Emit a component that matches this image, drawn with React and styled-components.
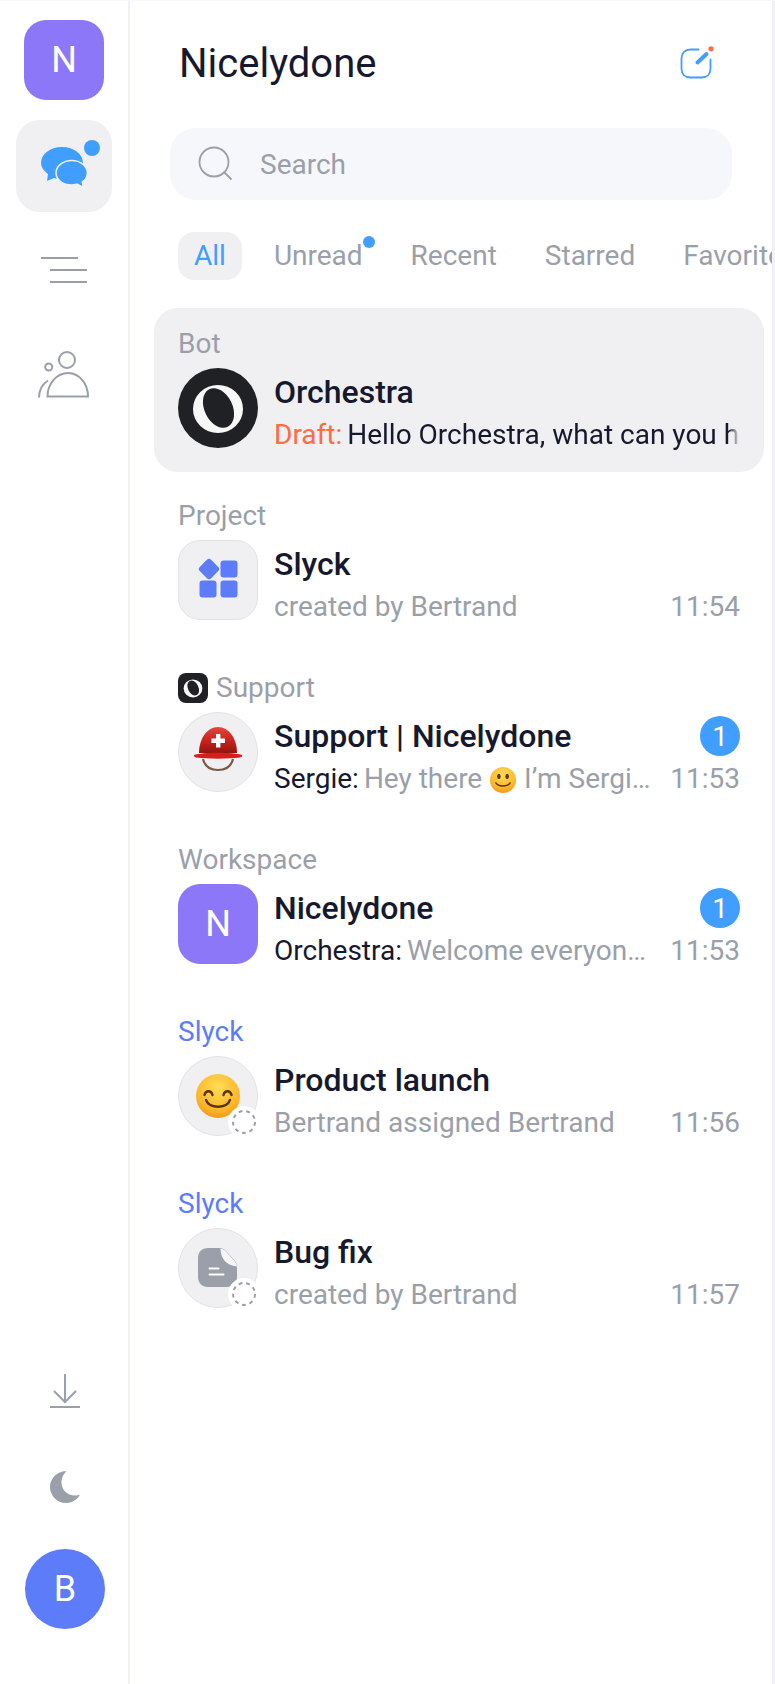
import React from "react";
import styled, { createGlobalStyle } from "styled-components";

const GRAY = "#9a9fa9";
const DARK = "#16192e";
const BLUE = "#409eff";
const INDIGO = "#5c7cfa";
const PURPLE = "#8c77f8";
const SOFT = "#f0f0f2";

const Global = createGlobalStyle`
  html, body { margin: 0; padding: 0; background: #fff; }
  body { font-family: Roboto, "Liberation Sans", sans-serif; color: ${DARK}; }
  * { box-sizing: border-box; }
`;

const Page = styled.div`
  display: flex;
  width: 775px;
  height: 1684px;
  overflow: hidden;
  border-top: 1px solid #f8f8fb;
`;

const Rail = styled.aside`
  width: 130px;
  flex: none;
  border-right: 2px solid #f0f0f6;
  display: flex;
  flex-direction: column;
  justify-content: space-between;
  align-items: center;
  padding: 19px 0 55px;
`;

const RailGroup = styled.div`
  display: flex;
  flex-direction: column;
  align-items: center;
  gap: ${(p) => p.$gap || 12}px;
`;

const Workspace = styled.div`
  width: 80px;
  height: 80px;
  margin-bottom: 8px;
  border-radius: 22px;
  background: ${PURPLE};
  color: #fff;
  font-size: 36px;
  display: flex;
  align-items: center;
  justify-content: center;
`;

const NavItem = styled.div`
  width: 96px;
  height: 92px;
  border-radius: 24px;
  background: ${(p) => (p.$active ? SOFT : "transparent")};
  display: flex;
  align-items: center;
  justify-content: center;
  svg { display: block; }
`;

const Me = styled.div`
  width: 80px;
  height: 80px;
  margin: 2px 0 0 2px;
  border-radius: 50%;
  background: ${INDIGO};
  color: #fff;
  font-size: 36px;
  display: flex;
  align-items: center;
  justify-content: center;
`;

const Tool = styled.div`
  height: 72px;
  margin-left: 2px;
  display: flex;
  align-items: center;
  justify-content: center;
`;

const Panel = styled.main`
  flex: 1;
  min-width: 0;
  border-right: 3px solid #f0f0f6;
  display: flex;
  flex-direction: column;
  padding-top: 40px;
`;

const Header = styled.header`
  height: 46px;
  display: flex;
  align-items: center;
  justify-content: space-between;
  padding: 0 57px 0 49px;
`;

const Title = styled.h1`
  margin: 0;
  font-size: 40px;
  line-height: 46px;
  font-weight: 400;
  color: ${DARK};
`;

const Search = styled.div`
  height: 72px;
  margin: 41px 40px 0;
  padding: 0 28px;
  border-radius: 26px;
  background: #f6f7fb;
  display: flex;
  align-items: center;
  gap: 26px;
  font-size: 28px;
  color: ${GRAY};
`;

const Tabs = styled.nav`
  margin-top: 32px;
  padding-left: 48px;
  display: flex;
  gap: 16px;
  overflow: hidden;
`;

const Tab = styled.div`
  position: relative;
  flex: none;
  height: 48px;
  padding: 0 16px;
  border-radius: 16px;
  font-size: 28px;
  line-height: 48px;
  background: ${(p) => (p.$active ? SOFT : "transparent")};
  color: ${(p) => (p.$active ? BLUE : GRAY)};
`;

const TabDot = styled.span`
  position: absolute;
  top: 4px;
  right: 4px;
  width: 12px;
  height: 12px;
  border-radius: 50%;
  background: ${BLUE};
`;

const List = styled.div`
  margin: 28px 8px 0 24px;
  display: flex;
  flex-direction: column;
  gap: 8px;
`;

const Card = styled.article`
  height: 164px;
  padding: 16px 24px 24px;
  border-radius: 24px;
  background: ${(p) => (p.$active ? SOFT : "transparent")};
`;

const Kind = styled.div`
  height: 40px;
  margin-bottom: 4px;
  display: flex;
  align-items: center;
  gap: 8px;
  font-size: 28px;
  line-height: 40px;
  color: ${(p) => (p.$accent ? INDIGO : GRAY)};
`;

const Row = styled.div`
  height: 80px;
  display: flex;
  gap: 16px;
`;

const Avatar = styled.div`
  position: relative;
  flex: none;
  width: 80px;
  height: 80px;
  border-radius: ${(p) => (p.$square ? "22px" : "50%")};
  background: ${(p) => p.$bg || SOFT};
  border: ${(p) => (p.$bare ? "none" : "1px solid #e3e3e6")};
  color: #fff;
  font-size: 36px;
  display: flex;
  align-items: center;
  justify-content: center;
  svg { display: block; flex: none; }
`;

const Pending = styled.span`
  position: absolute;
  right: -3px;
  bottom: -3px;
  width: 32px;
  height: 32px;
  border-radius: 50%;
  background: #fff;
  display: flex;
  align-items: center;
  justify-content: center;
`;

const Body = styled.div`
  flex: 1;
  min-width: 0;
  padding-top: 4px;
`;

const Top = styled.div`
  height: 40px;
  display: flex;
  align-items: center;
  justify-content: space-between;
`;

const Name = styled.div`
  font-size: 32px;
  line-height: 40px;
  font-weight: 500;
  color: ${DARK};
  white-space: nowrap;
`;

const Count = styled.span`
  width: 40px;
  height: 40px;
  border-radius: 50%;
  background: ${BLUE};
  color: #fff;
  font-size: 28px;
  display: flex;
  align-items: center;
  justify-content: center;
`;

const Bottom = styled.div`
  height: 36px;
  margin-top: 5px;
  display: flex;
  align-items: center;
  gap: 14px;
  font-size: 28px;
  line-height: 36px;
`;

const Line = styled.div`
  flex: 1;
  min-width: 0;
  display: flex;
  gap: 5px;
`;

const Who = styled.span`
  flex: none;
  color: ${(p) => (p.$draft ? "#ff6b45" : DARK)};
`;

const Text = styled.span`
  flex: 1;
  min-width: 0;
  overflow: hidden;
  white-space: nowrap;
  text-overflow: ${(p) => (p.$fade ? "clip" : "ellipsis")};
  color: ${(p) => (p.$fade ? DARK : GRAY)};
  ${(p) => p.$fade && "-webkit-mask-image: linear-gradient(to right, #000 97%, transparent);"}
  svg { display: inline-block; vertical-align: -5px; margin: 0 1px; }
`;

const Time = styled.span`
  flex: none;
  color: ${GRAY};
`;

const SmallMark = styled.span`
  width: 30px;
  height: 30px;
  border-radius: 8px;
  background: #202124;
  display: flex;
  align-items: center;
  justify-content: center;
  svg { display: block; }
`;

function OrchestraMark({ size = 80 }) {
  return (
    <svg width={size} height={size} viewBox="0 0 80 80">
      <ellipse cx="40" cy="41" rx="25" ry="24" fill="#f8f8f8" />
      <ellipse cx="40.500" cy="40" rx="14" ry="21" fill="#202124" transform="rotate(-26 40.500 40)" />
    </svg>
  );
}

function ChatIcon() {
  return (
    <svg width="96" height="92" viewBox="16 120 96 92">
      <path d="M41 163c0-9 9-16 21-16s21 7 21 16-9 16-21 16c-3 0-5 0-8-1l-7 3 1-7c-4-3-7-7-7-11z" fill={BLUE} />
      <path d="M56 173c0-7 7-12.500 15.700-12.500S87.400 166 87.400 173c0 4-2 7-5 9l1 5.500-6.500-3.300c-2 .5-3.500.8-5.200.8C63 185 56 180 56 173z" fill={BLUE} stroke={SOFT} strokeWidth="1.6" />
      <circle cx="92" cy="148" r="8" fill={BLUE} />
    </svg>
  );
}

function MenuIcon() {
  return (
    <svg width="48" height="28" viewBox="0 0 48 28" fill="none" stroke={GRAY} strokeWidth="2">
      <path d="M1 2h37M10 14h37M10 26h37" />
    </svg>
  );
}

function PeopleIcon() {
  return (
    <svg width="52" height="50" viewBox="38 349 52 50" fill="none" stroke={GRAY} strokeWidth="2">
      <circle cx="67" cy="360" r="8" />
      <circle cx="48.700" cy="367" r="3.500" />
      <path d="M47.500 396.500h40.500c0-13-9-23.500-20-23.500s-20.500 10.500-20.500 23.500z" />
      <path d="M39 397.500c0-7 3.500-13.500 9-17" />
    </svg>
  );
}

function DownloadIcon() {
  return (
    <svg width="32" height="36" viewBox="0 0 32 36" fill="none" stroke={GRAY} strokeWidth="2">
      <path d="M16 1v29M5 18l11 11 11-11M1 34h30" />
    </svg>
  );
}

function MoonIcon() {
  return (
    <svg width="32" height="34" viewBox="0 0 32 34">
      <path d="M18.500 1C8 1 1 8.500 1 17s7 16 16 16c6 0 11-3 14-8.500-1.500.8-3 1-5 1-8 0-13.500-6-13.500-13 0-4.500 2-9 5.500-11.500z" fill={GRAY} />
    </svg>
  );
}

function SearchIcon() {
  return (
    <svg width="36" height="36" viewBox="0 0 36 36" fill="none" stroke={GRAY} strokeWidth="1.800">
      <circle cx="16" cy="16" r="14.500" />
      <path d="M26.500 26.500l7 7" />
    </svg>
  );
}

function ComposeIcon() {
  return (
    <svg width="36" height="36" viewBox="0 0 36 36" fill="none">
      <path d="M19.500 3.500h-8C6 3.500 2.500 7 2.500 12.500v10c0 5.500 3.500 9 9 9h11c5.500 0 9-3.500 9-9v-9" stroke={BLUE} strokeWidth="1.800" strokeLinecap="round" />
      <path d="M18.500 16.500l9-8.500" stroke={BLUE} strokeWidth="4" strokeLinecap="round" />
      <circle cx="32" cy="2.800" r="2.600" fill="#ff6b45" />
    </svg>
  );
}

function BlocksIcon() {
  return (
    <svg width="80" height="80" viewBox="0 0 80 80" fill={INDIGO}>
      <rect x="23" y="21" width="16" height="16" rx="3" transform="rotate(45 31 29)" />
      <rect x="42.500" y="20.500" width="17" height="17" rx="3" />
      <rect x="21.500" y="40.500" width="17" height="17" rx="3" />
      <rect x="42.500" y="40.500" width="17" height="17" rx="3" />
    </svg>
  );
}

function HelmetIcon() {
  return (
    <svg width="80" height="80" viewBox="0 0 80 80">
      <defs>
        <linearGradient id="dome" x1="0" y1="0" x2="0" y2="1">
          <stop offset="0" stopColor="#e8453f" />
          <stop offset="0.55" stopColor="#c8201c" />
          <stop offset="1" stopColor="#8f1512" />
        </linearGradient>
      </defs>
      <path d="M25 47c2 8 7 11 15 11s13-3 15-11" fill="none" stroke="#7a5a42" strokeWidth="2.200" />
      <path d="M21 41c0-14 8-26 19-26s19 12 19 26z" fill="url(#dome)" />
      <path d="M16 43c8-3 40-3 48 0 .5 1-.5 2.200-2 2.500-12 1.500-32 1.500-44 0-1.500-.3-2.500-1.500-2-2.500z" fill="#d3201c" />
      <path d="M38 22h4.400v4.600H47V31h-4.600v4.600H38V31h-4.600v-4.400H38z" fill="#fff" />
    </svg>
  );
}

function SmileIcon({ size = 44, big }) {
  const id = big ? "faceBig" : "faceSmall";
  return (
    <svg width={size} height={size} viewBox="0 0 44 44">
      <defs>
        <radialGradient id={id} cx="0.5" cy="0.3" r="0.8">
          <stop offset="0" stopColor="#ffdd55" />
          <stop offset="0.65" stopColor="#fbb62a" />
          <stop offset="1" stopColor="#ee8a12" />
        </radialGradient>
      </defs>
      <circle cx="22" cy="22" r="22" fill={`url(#${id})`} />
      {big ? (
        <g fill="none" stroke="#5e3308" strokeWidth="2.400" strokeLinecap="round">
          <path d="M8.500 21c1-5 7-5 8 0M27.500 21c1-5 7-5 8 0" />
          <path d="M10 26c3 9 21 9 24 0" />
        </g>
      ) : (
        <g fill="#5e3308">
          <ellipse cx="15" cy="16" rx="3" ry="4.500" />
          <ellipse cx="29" cy="16" rx="3" ry="4.500" />
          <path d="M10 27c4 7 20 7 24 0" fill="none" stroke="#5e3308" strokeWidth="2.400" strokeLinecap="round" />
        </g>
      )}
    </svg>
  );
}

function DocIcon() {
  return (
    <svg width="80" height="80" viewBox="0 0 80 80">
      <path d="M30 20h11c3 0 5 1 7 3l8 9c2 2 3 4 3 7v10c0 6-4 10-10 10H30c-6 0-10-4-10-10V30c0-6 4-10 10-10z" fill={GRAY} />
      <path d="M42.500 20.500c0 10 6 17 16.500 18-.3-2-1.200-4.200-3-6l-8-9c-1.600-1.700-3.500-2.800-5.500-3z" fill="#f6f6f8" />
      <path d="M31.500 40.500h9M31.500 46.500h14" stroke="#fff" strokeWidth="2" strokeLinecap="round" />
    </svg>
  );
}

function DashedRing() {
  return (
    <svg width="26" height="26" viewBox="0 0 26 26">
      <circle cx="13" cy="13" r="11" fill="none" stroke={GRAY} strokeWidth="2" strokeDasharray="3.800 3.880" />
    </svg>
  );
}

const tabs = [
  { label: "All", active: true },
  { label: "Unread", dot: true },
  { label: "Recent" },
  { label: "Starred" },
  { label: "Favorites" },
];

const rows = [
  {
    kind: "Bot",
    name: "Orchestra",
    active: true,
    who: "Draft:",
    draft: true,
    text: "Hello Orchestra, what can you help me with today",
    avatar: <Avatar $bg="#202124" $bare><OrchestraMark /></Avatar>,
  },
  {
    kind: "Project",
    name: "Slyck",
    text: "created by Bertrand",
    time: "11:54",
    avatar: <Avatar $square><BlocksIcon /></Avatar>,
  },
  {
    kind: "Support",
    mark: true,
    name: "Support | Nicelydone",
    count: 1,
    who: "Sergie:",
    text: <>Hey there <SmileIcon size={26} /> I’m Sergie, welcome</>,
    time: "11:53",
    avatar: <Avatar><HelmetIcon /></Avatar>,
  },
  {
    kind: "Workspace",
    name: "Nicelydone",
    count: 1,
    who: "Orchestra:",
    text: "Welcome everyone to Nicelydone",
    time: "11:53",
    avatar: <Avatar $square $bare $bg={PURPLE}>N</Avatar>,
  },
  {
    kind: "Slyck",
    accent: true,
    name: "Product launch",
    text: "Bertrand assigned Bertrand",
    time: "11:56",
    avatar: <Avatar><SmileIcon big /><Pending><DashedRing /></Pending></Avatar>,
  },
  {
    kind: "Slyck",
    accent: true,
    name: "Bug fix",
    text: "created by Bertrand",
    time: "11:57",
    avatar: <Avatar><DocIcon /><Pending><DashedRing /></Pending></Avatar>,
  },
];

export default function App() {
  return (
    <Page>
      <Global />
      <Rail>
        <RailGroup>
          <Workspace>N</Workspace>
          <NavItem $active><ChatIcon /></NavItem>
          <NavItem><MenuIcon /></NavItem>
          <NavItem><PeopleIcon /></NavItem>
        </RailGroup>
        <RailGroup $gap={24}>
          <Tool><DownloadIcon /></Tool>
          <Tool><MoonIcon /></Tool>
          <Me>B</Me>
        </RailGroup>
      </Rail>
      <Panel>
        <Header>
          <Title>Nicelydone</Title>
          <ComposeIcon />
        </Header>
        <Search>
          <SearchIcon />
          Search
        </Search>
        <Tabs>
          {tabs.map((t) => (
            <Tab key={t.label} $active={t.active}>
              {t.label}
              {t.dot && <TabDot />}
            </Tab>
          ))}
        </Tabs>
        <List>
          {rows.map((r) => (
            <Card key={r.name} $active={r.active}>
              <Kind $accent={r.accent}>
                {r.mark && <SmallMark><OrchestraMark size={30} /></SmallMark>}
                {r.kind}
              </Kind>
              <Row>
                {r.avatar}
                <Body>
                  <Top>
                    <Name>{r.name}</Name>
                    {r.count && <Count>{r.count}</Count>}
                  </Top>
                  <Bottom>
                    <Line>
                      {r.who && <Who $draft={r.draft}>{r.who}</Who>}
                      <Text $fade={r.draft}>{r.text}</Text>
                    </Line>
                    {r.time && <Time>{r.time}</Time>}
                  </Bottom>
                </Body>
              </Row>
            </Card>
          ))}
        </List>
      </Panel>
    </Page>
  );
}
